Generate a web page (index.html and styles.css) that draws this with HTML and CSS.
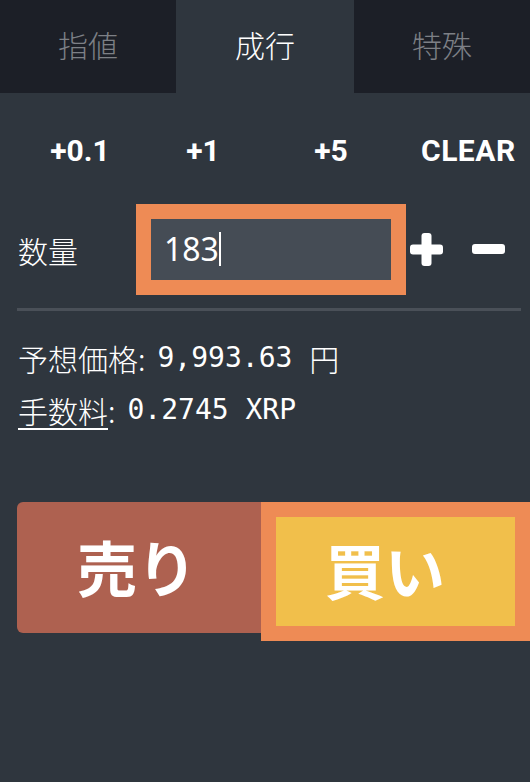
FILE: index.html
```
<!DOCTYPE html>
<html lang="ja">
<head>
<meta charset="utf-8">
<link rel="stylesheet" href="styles.css">
</head>
<body>
<div class="page">
  <div class="tabs">
    <div class="tab">指値</div>
    <div class="tab active">成行</div>
    <div class="tab">特殊</div>
  </div>
  <div class="quick">
    <div class="q">+0.1</div>
    <div class="q">+1</div>
    <div class="q">+5</div>
    <div class="q q-clear">CLEAR</div>
  </div>
  <div class="qty">
    <div class="qty-label">数量</div>
    <div class="qty-input"><span class="qty-val">183</span><span class="caret"></span></div>
    <svg class="step step-plus" width="33" height="33" viewBox="0 0 33 33"><rect x="0" y="11.5" width="33" height="10" rx="3" fill="#fff"/><rect x="11.5" y="0" width="10" height="33" rx="3" fill="#fff"/></svg>
    <svg class="step step-minus" width="33" height="33" viewBox="0 0 33 33"><rect x="0" y="11" width="33" height="10" rx="3" fill="#fff"/></svg>
  </div>
  <div class="sep"></div>
  <div class="info">
    <div class="line"><span class="lbl">予想価格:</span><span class="val">9,993.63 </span><span class="unit">円</span></div>
    <div class="line"><span class="lbl"><span class="ul">手数料</span>:</span><span class="val">0.2745 XRP</span></div>
  </div>
  <div class="actions">
    <div class="btn sell">売り</div>
    <div class="btn buy">買い</div>
  </div>
</div>
</body>
</html>
```
FILE: styles.css
```
* { box-sizing: border-box; }
html, body { margin: 0; padding: 0; }
body {
  background: #2f363e;
  width: 530px;
  height: 782px;
  overflow: hidden;
  font-family: "Noto Sans CJK JP", "Noto Sans", sans-serif;
  font-weight: 300;
  color: #fff;
}
.tabs {
  display: grid;
  grid-template-columns: 176px 178px 176px;
  height: 93px;
}
.tab {
  background: #1c1f27;
  color: #7d8086;
  font-size: 30px;
  display: flex;
  align-items: center;
  justify-content: center;
  padding-bottom: 5px;
}
.tab.active {
  background: #2f363e;
  color: #fff;
}
.quick {
  margin-top: 28px;
  height: 60px;
  display: grid;
  grid-template-columns: 124px 122px 134px 1fr;
  padding-left: 18px;
  font-family: Roboto, "Liberation Sans", sans-serif;
  font-weight: 700;
  font-size: 30px;
  line-height: 60px;
}
.q { text-align: center; }
.q-clear { text-align: left; padding-left: 23px; letter-spacing: 0.5px; }
.qty {
  margin-top: 23px;
  height: 91px;
  display: flex;
  align-items: center;
  padding-left: 18px;
}
.qty-label {
  width: 118px;
  font-size: 30px;
}
.qty-input {
  width: 270px;
  height: 91px;
  border: 15px solid #ee8b55;
  background: #454c55;
  display: flex;
  align-items: center;
  padding-left: 13px;
  padding-bottom: 2px;
}
.qty-val {
  font-family: "Noto Sans", sans-serif;
  font-weight: 400;
  font-size: 32px;
}
.caret {
  width: 2px;
  height: 34px;
  background: #fff;
}
.step { display: block; }
.step-plus { margin-left: 4px; }
.step-minus { margin-left: 29px; }
.sep {
  margin: 13px 9px 0 17px;
  height: 3px;
  background: #4a5058;
}
.info {
  margin-top: 21px;
  padding-left: 18px;
}
.line {
  height: 52px;
  line-height: 52px;
  white-space: pre;
  display: flex;
  align-items: center;
}
.lbl { font-size: 30px; }
.ul {
  text-decoration: underline;
  text-decoration-thickness: 2px;
  text-underline-offset: 5px;
}
.val {
  font-family: "DejaVu Sans Mono", monospace;
  font-weight: 400;
  font-size: 28px;
  margin-left: 12px;
}
.unit { font-size: 30px; }
.actions {
  margin-top: 66px;
  display: flex;
  align-items: flex-start;
  padding-left: 17px;
}
.btn {
  font-weight: 700;
  font-size: 60px;
  display: flex;
  align-items: center;
  justify-content: center;
}
.sell {
  width: 244px;
  height: 131px;
  background: #ae6150;
  border-radius: 6px 0 0 6px;
  padding-right: 4px;
  padding-bottom: 4px;
}
.buy {
  width: 269px;
  height: 139px;
  background: #f1bf4b;
  border: 15px solid #ee8b55;
  padding-right: 21px;
  padding-bottom: 6px;
}
```
